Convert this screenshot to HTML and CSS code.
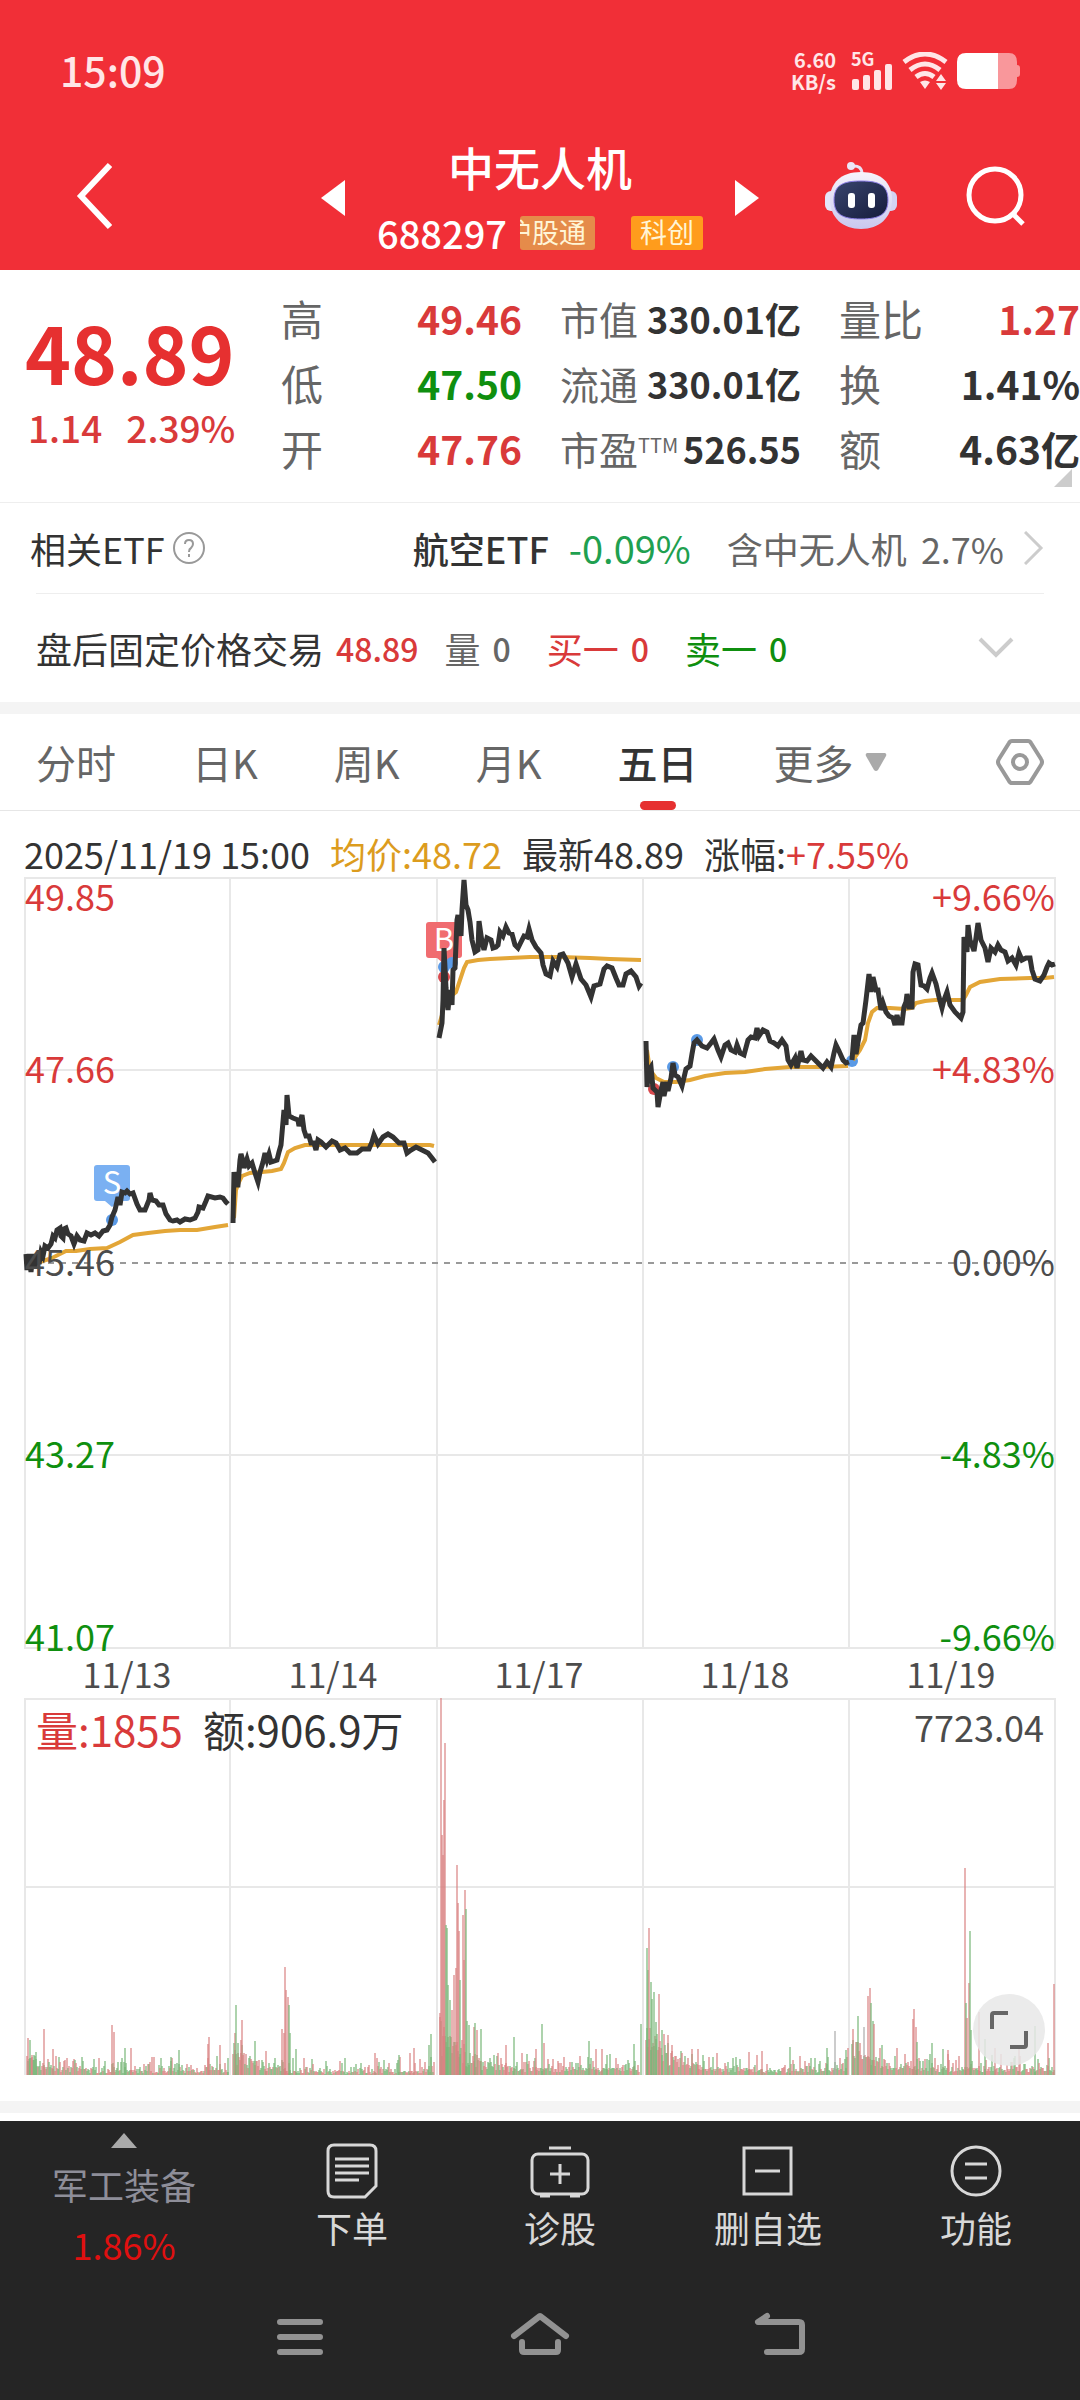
FILE: index.html
```html
<!DOCTYPE html>
<html lang="zh-CN">
<head>
    <meta charset="UTF-8">
    <meta name="viewport" content="width=device-width, initial-scale=1.0">
    <title>中无人机 688297</title>
    <link rel="stylesheet" href="styles.css">
</head>
<body>
    <header class="header">
        <!-- Status bar -->
        <div class="status-bar">
            <span class="clock">15:09</span>
            <div class="status-icons">
                <div class="net-speed"><span>6.60</span><span>KB/s</span></div>
                <div class="signal">
                    <span>5G</span>
                    <svg width="42" height="26" viewBox="0 0 42 26" fill="#ffe6e7">
                        <rect x="1" y="15" width="7" height="11" rx="2"/>
                        <rect x="12" y="11" width="7" height="15" rx="2"/>
                        <rect x="23" y="6" width="7" height="20" rx="2"/>
                        <rect x="34" y="0" width="7" height="26" rx="2"/>
                    </svg>
                </div>
                <svg width="46" height="38" viewBox="0 0 46 38" fill="none" stroke="#ffe6e7" stroke-width="5">
                    <path d="M2 10Q23 -6 44 10"/>
                    <path d="M8 18Q23 6 38 18"/>
                    <path d="M14 25Q23 18 32 25"/>
                    <path d="M18 30Q23 27 28 30L23 37ZM34 29L39 22L44 29ZM34 31L39 38L44 31Z" fill="#ffe6e7" stroke="none"/>
                </svg>
                <svg width="64" height="36" viewBox="0 0 64 36">
                    <path d="M41 0H52Q60 0 60 9V12Q63 12 63 15V21Q63 24 60 24V27Q60 36 52 36H41Z" fill="#f9979b"/>
                    <path d="M41 0H9Q0 0 0 9V27Q0 36 9 36H41Z" fill="#fff"/>
                </svg>
            </div>
        </div>

        <!-- Title bar -->
        <div class="title-bar">
            <button class="icon-btn back" aria-label="返回">
                <svg width="38" height="68" viewBox="0 0 38 68" fill="none" stroke="#fff" stroke-width="6"><path d="M36 3L7 34L36 65"/></svg>
            </button>
            <div class="stock">
                <button class="icon-btn" aria-label="上一只"><svg width="24" height="36" viewBox="0 0 24 36"><path d="M24 0V36L0 18Z" fill="#fff"/></svg></button>
                <div class="stock-name">
                    <h1>中无人机</h1>
                    <div class="stock-code">
                        <span class="code">688297</span>
                        <span class="tag tag-hk"><span>沪股通</span></span>
                        <span class="tag tag-star">科创</span>
                    </div>
                </div>
                <button class="icon-btn" aria-label="下一只"><svg width="24" height="36" viewBox="0 0 24 36"><path d="M0 0V36L24 18Z" fill="#fff"/></svg></button>
            </div>
            <div class="title-actions">
                <button class="icon-btn" aria-label="智能助手">
                    <svg width="72" height="70" viewBox="0 0 72 70">
                        <defs>
                            <linearGradient id="shell" x1="0" y1="0" x2="0" y2="1"><stop offset="0" stop-color="#f7f3fb"/><stop offset="1" stop-color="#c9c8ee"/></linearGradient>
                            <linearGradient id="visor" x1="0" y1="0" x2="1" y2="1"><stop offset="0" stop-color="#39456e"/><stop offset="1" stop-color="#151b3b"/></linearGradient>
                        </defs>
                        <path d="M27 5Q37 4 37 13" fill="none" stroke="#e9e2f4" stroke-width="3"/>
                        <circle cx="26" cy="5" r="4" fill="#ece6f7"/>
                        <rect x="0" y="30" width="14" height="20" rx="6" fill="#e4e6fa"/>
                        <rect x="58" y="30" width="14" height="20" rx="6" fill="#d3d2f2"/>
                        <path d="M36 11C56 11 67 22 67 38C67 57 54 68 36 68C18 68 5 57 5 38C5 22 16 11 36 11Z" fill="url(#shell)"/>
                        <path d="M36 20C54 20 63 24 63 39C63 53 55 58 36 58C17 58 9 53 9 39C9 24 18 20 36 20Z" fill="url(#visor)" stroke="#8d7fe8" stroke-width="1"/>
                        <rect x="23" y="32" width="7" height="15" rx="3" fill="#fff"/>
                        <rect x="43" y="32" width="7" height="15" rx="3" fill="#fff"/>
                    </svg>
                </button>
                <button class="icon-btn" aria-label="搜索">
                    <svg width="60" height="60" viewBox="0 0 60 60" fill="none" stroke="#fff" stroke-width="5"><circle cx="29" cy="29" r="26"/><path d="M47 48L57 58"/></svg>
                </button>
            </div>
        </div>
    </header>

    <main>
        <!-- Quote -->
        <section class="quote">
            <div class="price">
                <strong>48.89</strong>
                <div class="change"><span>1.14</span><span>2.39%</span></div>
            </div>
            <dl>
                <div><dt>高</dt><dd class="up">49.46</dd></div>
                <div><dt>低</dt><dd class="down">47.50</dd></div>
                <div><dt>开</dt><dd class="up">47.76</dd></div>
            </dl>
            <dl class="compact">
                <div><dt>市值</dt><dd>330.01亿</dd></div>
                <div><dt>流通</dt><dd>330.01亿</dd></div>
                <div><dt>市盈<sup>TTM</sup></dt><dd>526.55</dd></div>
            </dl>
            <dl>
                <div><dt>量比</dt><dd class="up">1.27</dd></div>
                <div><dt>换</dt><dd>1.41%</dd></div>
                <div><dt>额</dt><dd>4.63亿</dd></div>
            </dl>
            <svg class="corner" width="18" height="18" viewBox="0 0 18 18"><path d="M18 0V18H0Z" fill="#ccc"/></svg>
        </section>

        <!-- Related ETF -->
        <a class="etf" href="#">
            <span>相关ETF</span>
            <svg width="32" height="32" viewBox="0 0 32 32" fill="none" stroke="#999" stroke-width="2"><circle cx="16" cy="16" r="15"/><path d="M12 12Q12 8 16 8Q20 8 20 12Q20 14 18 16Q16 17 16 20M16 22V25"/></svg>
            <span class="etf-name">航空ETF</span>
            <span class="etf-change">-0.09%</span>
            <span class="etf-weight"><span>含中无人机</span><span>2.7%</span></span>
            <svg width="20" height="34" viewBox="0 0 20 34" fill="none" stroke="#ccc" stroke-width="3"><path d="M1 1L17 17L1 33"/></svg>
        </a>

        <!-- After-hours trading -->
        <section class="after-hours">
            <span>盘后固定价格交易</span>
            <b class="up">48.89</b>
            <span class="muted item">量 <b>0</b></span>
            <span class="up item">买一 <b>0</b></span>
            <span class="down item">卖一 <b>0</b></span>
            <button class="icon-btn" aria-label="展开"><svg width="36" height="22" viewBox="0 0 36 22" fill="none" stroke="#ccc" stroke-width="4"><path d="M2 2L18 18L34 2"/></svg></button>
        </section>

        <!-- Period tabs -->
        <nav class="tabs">
            <button>分时</button>
            <button>日K</button>
            <button>周K</button>
            <button>月K</button>
            <button class="active">五日</button>
            <button>更多<svg width="22" height="18" viewBox="0 0 22 18"><path d="M2 0H20Q22 1 21 3L13 17Q11 19 9 17L1 3Q0 1 2 0Z" fill="#aaa"/></svg></button>
            <button class="settings" aria-label="设置"><svg width="48" height="46" viewBox="0 0 48 46" fill="none" stroke="#999" stroke-width="4"><path d="M16 2H32Q34 2 35 4L45 20Q47 23 45 26L35 42Q34 44 32 44H16Q14 44 13 42L3 26Q1 23 3 20L13 4Q14 2 16 2Z"/><circle cx="24" cy="23" r="7"/></svg></button>
        </nav>

        <!-- Charts -->
        <section class="charts">
            <div class="info">
                <span>2025/11/19 15:00</span>
                <span class="avg">均价:48.72</span>
                <span>最新48.89</span>
                <span>涨幅:<span class="up">+7.55%</span></span>
            </div>

            <svg class="chart" viewBox="0 16 1080 822">
                <g class="grid">
                    <path d="M24 18H1056M24 210H1056M24 595H1056M24 788H1056M25 17V788M230 17V788M437 17V788M643 17V788M849 17V788M1055 17V788"/>
                    <path class="zero" d="M24 403H1056"/>
                </g>
                <g class="marks">
                    <path d="M97 305H127Q130 305 130 308V338Q130 341 127 341H119L112 347L105 341H97Q94 341 94 338V308Q94 305 97 305Z" fill="#7ab0f2"/>
                    <path d="M429 62H459Q462 62 462 65V95Q462 98 459 98H451L444 104L437 98H429Q426 98 426 95V65Q426 62 429 62Z" fill="#f06c70"/>
                    <text x="112" y="334" text-anchor="middle">S</text>
                    <text x="444" y="91" text-anchor="middle">B</text>
                </g>
                <g id="dots"></g>
                <g id="avgLines" class="avg-line"></g>
                <g id="priceLines" class="price-line"></g>
                <g class="axis">
                    <text class="up" x="25" y="51">49.85</text>
                    <text class="up" x="25" y="223">47.66</text>
                    <text x="25" y="416">45.46</text>
                    <text class="down" x="25" y="608">43.27</text>
                    <text class="down" x="25" y="791">41.07</text>
                </g>
                <g class="axis" text-anchor="end">
                    <text class="up" x="1055" y="51">+9.66%</text>
                    <text class="up" x="1055" y="223">+4.83%</text>
                    <text x="1055" y="416">0.00%</text>
                    <text class="down" x="1055" y="608">-4.83%</text>
                    <text class="down" x="1055" y="791">-9.66%</text>
                </g>
                <g class="axis dates" text-anchor="middle">
                    <text x="127" y="828">11/13</text>
                    <text x="333" y="828">11/14</text>
                    <text x="539" y="828">11/17</text>
                    <text x="745" y="828">11/18</text>
                    <text x="951" y="828">11/19</text>
                </g>
            </svg>

            <div class="volume">
                <svg class="chart" viewBox="0 0 1080 378">
                    <path class="grid" d="M24 1H1056M24 189H1056M25 0V377M230 0V377M437 0V377M643 0V377M849 0V377M1055 0V377"/>
                    <g id="volumeBars"></g>
                </svg>
                <div class="volume-info">
                    <span class="up">量:1855</span>
                    <span>额:906.9万</span>
                    <span class="volume-max">7723.04</span>
                </div>
                <button class="expand" aria-label="全屏"><svg width="38" height="38" viewBox="0 0 38 38" fill="none" stroke="#666" stroke-width="4"><path d="M2 18V4Q2 2 4 2H18M36 20V34Q36 36 34 36H20"/></svg></button>
            </div>
        </section>
    </main>

    <footer class="footer">
        <nav class="toolbar">
            <button class="sector">
                <svg width="26" height="15" viewBox="0 0 26 15"><path d="M13 0L26 15H0Z" fill="#aaa"/></svg>
                <span>军工装备</span>
                <span class="sector-change">1.86%</span>
            </button>
            <button>
                <svg width="60" height="56" viewBox="0 0 60 56" fill="none" stroke="#d8d8d8" stroke-width="3"><path d="M12 2H48Q54 2 54 8V43L43 54H12Q6 54 6 48V8Q6 2 12 2ZM13 16H47M13 23H47M13 30H47M13 37H37"/></svg>
                <span>下单</span>
            </button>
            <button>
                <svg width="60" height="56" viewBox="0 0 60 56" fill="none" stroke="#d8d8d8" stroke-width="3"><rect x="2" y="11" width="56" height="40" rx="6"/><path d="M19 5H41M30 21V41M20 31H40M10 53H20M40 53H50"/></svg>
                <span>诊股</span>
            </button>
            <button>
                <svg width="60" height="56" viewBox="0 0 60 56" fill="none" stroke="#d8d8d8" stroke-width="3"><rect x="6" y="5" width="47" height="46"/><path d="M17 28H42"/></svg>
                <span>删自选</span>
            </button>
            <button>
                <svg width="60" height="56" viewBox="0 0 60 56" fill="none" stroke="#d8d8d8" stroke-width="3"><circle cx="30" cy="28" r="24"/><path d="M19 21H41M19 35H41"/></svg>
                <span>功能</span>
            </button>
        </nav>
        <nav class="system-nav">
            <button aria-label="菜单"><svg width="60" height="48" viewBox="0 0 60 48" fill="none" stroke="#929292" stroke-width="6" stroke-linecap="round"><path d="M10 12H50M10 27H50M10 42H50"/></svg></button>
            <button aria-label="主页"><svg width="60" height="48" viewBox="0 0 60 48" fill="none" stroke="#929292" stroke-width="6" stroke-linecap="round" stroke-linejoin="round"><path d="M4 26L30 6L56 26M12 32V40Q12 42 14 42H46Q48 42 48 40V32"/></svg></button>
            <button aria-label="后退"><svg width="60" height="48" viewBox="0 0 60 48" fill="none" stroke="#929292" stroke-width="6" stroke-linecap="round" stroke-linejoin="round"><path d="M17 6L8 12H49Q52 12 52 15V39Q52 42 49 42H17"/></svg></button>
        </nav>
    </footer>

    <script src="chart.js"></script>
</body>
</html>
```

FILE: styles.css
```css
/* Global Styles */
* {
    box-sizing: border-box;
}

body {
    margin: 0;
    font-family: "Noto Sans CJK SC", "Noto Sans", sans-serif;
    font-size: 36px;
    line-height: 48px;
    color: #333;
    background: #fff;
}

button {
    padding: 0;
    border: none;
    background: none;
    font: inherit;
    color: inherit;
    cursor: pointer;
}

svg {
    display: block;
    flex-shrink: 0;
}

.up {
    color: #d93a3a;
    fill: #d93a3a;
}

.down {
    color: #0f8f0f;
    fill: #0f8f0f;
}

.muted {
    color: #666;
}

/* Header */
.header {
    height: 270px;
    background: #f12f37;
    color: #fff;
}

.status-bar {
    display: flex;
    justify-content: space-between;
    align-items: center;
    height: 136px;
    padding: 2px 59px 0 60px;
}

.clock {
    font-size: 41px;
    font-weight: 500;
    color: #ffe6e7;
}

.status-icons {
    display: flex;
    align-items: center;
    gap: 9px;
    margin-top: 4px;
}

.net-speed {
    display: flex;
    flex-direction: column;
    margin-right: 6px;
    font-size: 20px;
    font-weight: 700;
    line-height: 22px;
    text-align: right;
    color: #ffe6e7;
}

.signal {
    display: flex;
    flex-direction: column;
    font-size: 18px;
    font-weight: 700;
    line-height: 12px;
    color: #ffe6e7;
}

.title-bar {
    display: grid;
    grid-template-columns: 1fr auto 1fr;
    align-items: start;
    padding: 0 54px 0 74px;
}

.icon-btn {
    display: flex;
    align-items: center;
}

.back {
    margin-top: 26px;
}

.stock {
    display: flex;
    width: 438px;
    margin-right: 20px;
    justify-content: space-between;
}

.stock > .icon-btn {
    height: 36px;
    margin-top: 44px;
}

.stock-name {
    display: flex;
    flex-direction: column;
    align-items: center;
    gap: 20px;
}

.stock-name h1 {
    margin: 0;
    font-size: 46px;
    font-weight: 500;
    line-height: 60px;
}

.stock-code {
    display: flex;
    align-items: center;
    height: 34px;
}

.code {
    margin-right: 13px;
    font-size: 38px;
    font-weight: 500;
    line-height: 34px;
}

.tag {
    display: flex;
    justify-content: flex-end;
    overflow: hidden;
    height: 34px;
    padding: 0 9px;
    border-radius: 3px;
    font-size: 27px;
    line-height: 32px;
    white-space: nowrap;
    color: #fff5d6;
}

.tag-hk {
    width: 75px;
    padding-left: 0;
    margin-right: 36px;
    background: #e58b4a;
}

.tag-star {
    background: #ff9c1c;
}

.title-actions {
    display: flex;
    justify-content: flex-end;
    align-items: center;
    gap: 69px;
    margin-top: 25px;
}

/* Quote */
.quote {
    position: relative;
    display: grid;
    grid-template-columns: 218px 1fr 1fr 1fr;
    column-gap: 38px;
    padding: 15px 0 22px 25px;
    border-bottom: 1px solid #eee;
}

.price {
    margin-top: 26px;
    color: #e63030;
}

.price strong {
    display: block;
    font-size: 78px;
    font-weight: 700;
    line-height: 80px;
}

.change {
    display: flex;
    gap: 24px;
    padding-left: 3px;
    font-size: 37px;
    font-weight: 500;
    line-height: 72px;
    color: #d93a3a;
}

.quote dl {
    margin: 0;
}

.quote dl div {
    display: flex;
    justify-content: space-between;
    align-items: center;
    height: 65px;
    white-space: nowrap;
}

.quote dt {
    font-size: 42px;
    color: #666;
}

.quote dd {
    margin: 0;
    font-size: 39px;
    font-weight: 700;
}

.quote .compact dt {
    font-size: 39px;
}

.quote .compact dd {
    font-size: 36px;
}

.quote sup {
    font-size: 20px;
    line-height: 20px;
    vertical-align: 12px;
}

.corner {
    position: absolute;
    right: 8px;
    bottom: 15px;
}

/* Related ETF */
.etf {
    display: flex;
    align-items: center;
    height: 91px;
    margin: 0 36px;
    border-bottom: 1px solid #eee;
    color: #333;
    text-decoration: none;
}

.etf > svg:nth-of-type(1) {
    margin-left: 8px;
}

.etf > span:first-child {
    margin-left: -6px;
}

.etf-name {
    margin-left: auto;
    font-weight: 500;
}

.etf-change {
    margin-left: 20px;
    font-size: 38px;
    color: #1fa050;
}

.etf-weight {
    display: flex;
    gap: 14px;
    margin: 0 20px 0 36px;
    color: #666;
}

/* After-hours trading */
.after-hours {
    display: flex;
    align-items: center;
    height: 108px;
    padding: 0 66px 0 36px;
}

.after-hours b {
    margin-left: 12px;
    font-size: 32px;
    font-weight: 500;
}

.after-hours .item {
    display: flex;
    margin-left: 26px;
}

.after-hours .item + .item {
    margin-left: 36px;
}

.after-hours .icon-btn {
    margin-left: auto;
}

/* Period tabs */
.tabs {
    display: flex;
    gap: 76px;
    height: 109px;
    padding: 0 36px;
    border-top: 12px solid #f4f4f4;
    border-bottom: 1px solid #e6e6e6;
    font-size: 40px;
    color: #666;
}

.tabs button {
    position: relative;
    display: flex;
    align-items: center;
    gap: 11px;
}

.tabs .active {
    font-weight: 500;
    color: #333;
}

.tabs .active::after {
    content: "";
    position: absolute;
    left: 50%;
    bottom: 0;
    width: 36px;
    height: 9px;
    margin-left: -18px;
    border-radius: 5px;
    background: #e63030;
}

.tabs .settings {
    margin-left: auto;
}

/* Charts */
.charts {
    padding-bottom: 25px;
}

.info {
    display: flex;
    gap: 20px;
    padding: 19px 24px 0;
    line-height: 46px;
}

.avg {
    color: #dc9c1e;
}

.chart {
    width: 100%;
    height: auto;
}

.grid {
    fill: none;
    stroke: #e8e8e8;
    stroke-width: 2;
}

.zero {
    stroke: #999;
    stroke-dasharray: 6 6;
}

.marks text {
    font-size: 31px;
    fill: #fff;
}

.axis text {
    font-size: 36px;
}

.axis.dates text {
    font-size: 34px;
}

.axis text:not([class]) {
    fill: #4c4c4c;
}

.avg-line {
    fill: none;
    stroke: #e3a637;
    stroke-width: 4;
}

.price-line {
    fill: none;
    stroke: #333;
    stroke-width: 5;
}

.volume {
    position: relative;
}

.volume-info {
    position: absolute;
    top: 7px;
    left: 36px;
    right: 36px;
    display: flex;
    gap: 20px;
    font-size: 42px;
}

.volume-max {
    margin-left: auto;
    font-size: 36px;
    line-height: 42px;
    color: #4c4c4c;
}

.expand {
    position: absolute;
    right: 35px;
    bottom: 10px;
    display: flex;
    align-items: center;
    justify-content: center;
    width: 72px;
    height: 72px;
    border-radius: 50%;
    background: rgba(232, 232, 232, 0.85);
}

/* Footer */
main {
    border-bottom: 12px solid #f4f4f4;
}

.footer {
    margin-top: 8px;
    background: #252525;
    color: #d8d8d8;
}

.toolbar {
    display: grid;
    grid-template-columns: 248px repeat(4, 1fr);
    height: 168px;
}

.toolbar button {
    display: flex;
    flex-direction: column;
    align-items: center;
    gap: 4px;
    padding-top: 22px;
}

.toolbar .sector {
    gap: 12px;
    padding-top: 12px;
    color: #8e8e99;
}

.sector-change {
    color: #e01010;
}

.system-nav {
    display: flex;
    justify-content: center;
    gap: 180px;
    padding: 21px 0 42px;
}
```

FILE: chart.js
```js
const SVG = 'http://www.w3.org/2000/svg';

// Minute prices, one line per trading day
const prices = [
    '26,394 27,410 29,394 31,412 33,394 35,408 37,394 39,404 41,392 43,396 45,386 48,388 51,384 53,376 55,378 57,370 60,368 61,376 63,378 64,369 66,368 68,374 71,376 74,384 77,376 80,380 84,381 87,373 91,375 95,373 99,376 103,371 107,370 110,365 112,357 115,350 118,337 120,345 122,332 125,333 127,331 130,334 133,333 137,344 140,350 145,350 149,340 150,333 152,340 156,341 159,345 163,345 166,354 170,360 173,361 177,360 180,362 185,359 190,360 195,358 198,352 199,347 203,348 206,341 208,336 215,338 220,337 223,338 226,342 228,344',
    '233,363 234,312 235,325 238,325 240,300 241,294 243,301 244,308 247,299 249,306 252,303 255,313 258,322 260,312 263,302 265,293 267,300 269,294 271,302 277,300 279,292 281,285 284,250 286,265 287,235 289,256 293,258 298,260 299,266 302,255 304,270 306,276 309,276 311,283 314,283 316,290 318,280 321,282 326,287 332,281 336,283 340,290 345,288 350,293 357,293 362,289 369,289 372,282 374,275 378,284 383,277 388,274 393,277 399,283 404,283 407,293 411,290 416,287 422,290 428,293 432,298 435,302',
    '439,178 442,163 443,140 444,88 446,128 448,150 450,130 452,145 453,110 455,108 457,60 458,55 461,76 462,50 464,20 466,45 468,50 470,62 472,80 475,92 478,90 479,61 482,82 484,90 487,78 491,80 493,88 496,87 498,85 500,72 503,76 506,67 509,73 512,74 515,85 518,88 521,82 524,76 527,77 529,69 532,80 536,87 541,93 543,105 546,114 550,116 553,101 557,107 560,95 563,94 568,103 572,117 576,104 581,119 586,125 591,137 594,126 600,124 604,109 607,106 612,108 616,118 619,125 623,125 626,114 631,111 636,117 639,126 641,123',
    '646,181 647,227 649,210 651,207 653,228 657,232 658,247 661,230 663,222 664,236 667,222 668,231 671,218 673,203 675,215 678,217 682,226 686,209 690,206 692,194 694,183 697,180 702,186 707,188 711,183 714,179 718,190 721,197 725,185 728,183 731,190 735,192 737,185 740,193 744,195 748,180 751,177 755,178 757,168 759,176 763,170 767,172 770,181 774,183 778,186 782,180 786,186 788,200 791,205 795,198 797,208 801,191 803,200 807,201 811,196 815,200 819,204 823,208 827,202 831,207 834,193 836,185 839,191 843,200 846,203 849,202',
    '852,200 854,175 856,194 858,182 861,165 863,163 866,140 869,114 871,132 873,117 876,130 878,130 881,150 883,143 886,152 889,156 893,158 895,165 897,155 899,163 902,163 904,147 906,142 907,134 909,147 912,147 913,112 915,104 918,105 921,125 924,126 927,129 930,118 932,113 936,124 939,137 942,148 944,140 947,132 950,145 955,152 961,158 963,152 964,77 967,92 968,65 970,80 974,91 976,78 978,63 981,80 985,88 988,102 991,88 995,92 998,85 1001,90 1005,92 1008,101 1012,98 1016,105 1019,93 1022,100 1026,98 1030,98 1032,110 1035,119 1040,121 1044,115 1047,107 1049,103 1052,105 1055,104'
];

// Average price
const averages = [
    '40,402 52,398 66,391 76,391 90,389 107,388 120,382 133,375 148,373 165,371 180,370 197,370 215,367 228,365',
    '234,358 236,330 239,322 242,316 250,313 262,312 272,311 281,309 284,303 288,292 295,288 305,285 330,285 380,285 430,285 434,286',
    '439,165 442,155 445,137 450,137 456,132 460,120 464,108 467,102 478,100 490,99 510,98 530,97 560,97 590,98 610,99 641,100',
    '647,190 650,210 656,218 664,222 676,222 690,220 705,216 725,213 745,212 765,209 790,207 820,207 848,206',
    '853,200 860,190 865,180 868,163 872,152 877,148 890,148 905,149 912,148 916,143 925,141 935,140 950,140 963,140 966,135 970,127 980,122 1000,119 1030,118 1045,118 1054,117'
];

// Own trades: x, y, side
const trades = [
    [112, 360, 's'], [444, 107, 's'], [452, 103, 's'], [444, 117, 'b'],
    [654, 229, 'b'], [673, 207, 's'], [697, 180, 's'], [852, 201, 's']
];

// Volume spikes: x, height, direction
const spikes = [
    [27, 37, 'r'], [29, 35, 'g'], [31, 20, 'r'], [33, 20, 'g'], [35, 16, 'g'], [43, 46, 'r'], [52, 26, 'r'], [111, 50, 'r'], [113, 43, 'r'], [124, 27, 'g'], [130, 27, 'r'], [170, 18, 'g'], [178, 25, 'g'], [207, 31, 'r'], [208, 38, 'r'], [219, 30, 'r'], [227, 17, 'g'],
    [234, 42, 'r'], [235, 70, 'g'], [237, 32, 'g'], [240, 35, 'r'], [241, 55, 'r'], [254, 34, 'g'], [265, 24, 'r'], [281, 46, 'r'], [283, 42, 'r'], [284, 108, 'r'], [285, 85, 'r'], [287, 78, 'r'], [288, 70, 'g'], [289, 42, 'g'], [295, 26, 'g'], [374, 22, 'r'], [398, 20, 'g'], [409, 22, 'r'], [413, 27, 'r'], [428, 30, 'g'], [430, 41, 'g'],
    [439, 62, 'r'], [440, 377, 'r'], [441, 240, 'r'], [442, 220, 'r'], [443, 275, 'r'], [444, 332, 'r'], [445, 150, 'g'], [446, 147, 'g'], [447, 90, 'g'], [449, 75, 'g'], [451, 65, 'r'], [453, 100, 'r'], [455, 107, 'r'], [456, 210, 'r'], [457, 172, 'r'], [458, 144, 'r'], [459, 95, 'g'], [462, 160, 'r'], [463, 115, 'r'], [464, 185, 'r'], [465, 166, 'g'], [466, 54, 'g'], [468, 50, 'g'], [473, 48, 'r'], [474, 52, 'g'], [476, 45, 'r'], [480, 46, 'g'], [505, 30, 'r'], [513, 38, 'g'], [521, 22, 'r'], [535, 26, 'r'], [541, 51, 'g'], [543, 32, 'r'], [588, 34, 'g'], [595, 26, 'r'], [601, 26, 'r'], [606, 20, 'g'], [633, 31, 'g'], [640, 51, 'g'],
    [646, 127, 'g'], [647, 105, 'g'], [648, 147, 'r'], [650, 93, 'g'], [651, 76, 'g'], [653, 83, 'g'], [655, 53, 'g'], [658, 81, 'r'], [661, 45, 'g'], [667, 40, 'r'], [671, 30, 'r'], [691, 26, 'r'], [697, 26, 'r'], [702, 20, 'g'], [748, 23, 'r'], [761, 24, 'r'], [789, 28, 'g'], [826, 27, 'g'], [834, 44, 'n'], [845, 25, 'g'], [847, 27, 'r'],
    [852, 46, 'r'], [857, 59, 'g'], [863, 48, 'n'], [867, 79, 'r'], [869, 87, 'r'], [870, 72, 'g'], [872, 54, 'g'], [873, 51, 'r'], [881, 30, 'g'], [912, 56, 'r'], [913, 66, 'r'], [915, 48, 'r'], [916, 33, 'g'], [931, 32, 'g'], [942, 26, 'g'], [947, 25, 'r'], [964, 207, 'r'], [965, 72, 'g'], [966, 57, 'r'], [968, 92, 'r'], [969, 144, 'g'], [970, 45, 'g'], [978, 63, 'r'], [984, 36, 'g'], [994, 27, 'r'], [1018, 26, 'r'], [1034, 49, 'g'], [1047, 32, 'r'], [1053, 91, 'r']
];

const barColors = { r: '#d98080', g: '#76b576', n: '#aaaaaa' };

function add(parentId, tag, attrs) {
    const el = document.createElementNS(SVG, tag);
    for (const key in attrs) {
        el.setAttribute(key, attrs[key]);
    }
    document.getElementById(parentId).appendChild(el);
}

function drawBar(x, height, dir) {
    add('volumeBars', 'rect', {
        x: x, y: 377 - height, width: 2, height: height,
        fill: barColors[dir], 'fill-opacity': 0.6
    });
}

averages.forEach(points => add('avgLines', 'polyline', { points }));
prices.forEach(points => add('priceLines', 'polyline', { points }));
trades.forEach(([x, y, side]) => add('dots', 'circle', {
    cx: x, cy: y, r: 6, fill: side === 's' ? '#5a9ae6' : '#d94a4e'
}));

// Small volumes between the spikes, busier after each open
let seed = 7;
function random() {
    seed = (seed * 16807) % 2147483647;
    return seed / 2147483647;
}

[[26, 228, 14, 4], [232, 434, 22, 3], [439, 639, 44, 6], [645, 847, 44, 5], [851, 1054, 30, 6]].forEach(([from, to, open, quiet]) => {
    for (let x = from; x < to; x++) {
        const base = quiet + open * Math.exp(-(x - from) / 22);
        const height = base * (0.4 + random() * 0.8) + Math.pow(random(), 4) * 16;
        drawBar(x, Math.round(height), random() < 0.5 ? 'r' : 'g');
    }
});
spikes.forEach(([x, height, dir]) => drawBar(x, height, dir));
```
